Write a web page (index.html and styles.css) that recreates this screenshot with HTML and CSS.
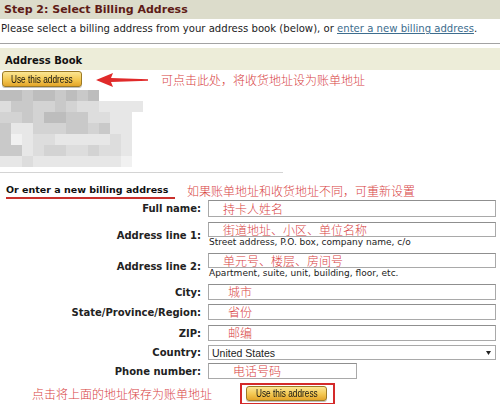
FILE: index.html
```html
<!DOCTYPE html>
<html>
<head>
<meta charset="utf-8">
<link rel="stylesheet" href="styles.css">
</head>
<body>
<div class="step">Step 2: Select Billing Address</div>
<div class="intro">Please select a billing address from your address book (below), or <a href="#">enter a new billing address</a>.</div>
<div class="rule"></div>
<div class="bookbar">Address Book</div>
<div class="pickrow">
  <div class="btn"><span>Use this address</span></div>
  <svg class="arrow" width="52" height="14" viewBox="0 0 52 14"><polygon points="0,7 17,0 15,5 52,6.2 52,7.8 15,9 17,14" fill="#e02a2a"/></svg>
  <div class="cn note1">可点击此处，将收货地址设为账单地址</div>
</div>
<div class="mosaic">
  <i class="a"></i><i class="a"></i><i class="b"></i><i class="a"></i><i class="a"></i><i class="b"></i><i class="a"></i><i class="b"></i><i class="a"></i><i class="w"></i><i class="w"></i><i class="w"></i><i class="w"></i>
  <i class="d"></i><i class="b"></i><i class="b"></i><i class="c"></i><i class="c"></i><i class="b"></i><i class="c"></i><i class="d"></i><i class="d"></i><i class="e"></i><i class="e"></i><i class="e"></i><i class="e"></i>
  <i class="c"></i><i class="c"></i><i class="b"></i><i class="c"></i><i class="a"></i><i class="a"></i><i class="b"></i><i class="b"></i><i class="d"></i><i class="d"></i><i class="e"></i><i class="e"></i><i class="w"></i>
  <i class="b"></i><i class="e"></i><i class="e"></i><i class="c"></i><i class="c"></i><i class="c"></i><i class="b"></i><i class="b"></i><i class="c"></i><i class="b"></i><i class="e"></i><i class="e"></i><i class="w"></i>
  <i class="b"></i><i class="f"></i><i class="e"></i><i class="d"></i><i class="d"></i><i class="e"></i><i class="e"></i><i class="e"></i><i class="e"></i><i class="e"></i><i class="d"></i><i class="e"></i><i class="w"></i>
  <i class="b"></i><i class="b"></i><i class="e"></i><i class="d"></i><i class="c"></i><i class="c"></i><i class="d"></i><i class="d"></i><i class="c"></i><i class="d"></i><i class="d"></i><i class="e"></i><i class="w"></i>
  <i class="e"></i><i class="e"></i><i class="d"></i><i class="e"></i><i class="e"></i><i class="e"></i><i class="e"></i><i class="e"></i><i class="e"></i><i class="e"></i><i class="e"></i><i class="f"></i><i class="w"></i>
</div>
<div class="rule2"></div>
<div class="ortitle">
  <div class="or">Or enter a new billing address</div>
  <div class="cn note2">如果账单地址和收货地址不同，可重新设置</div>
</div>
<div class="form">
  <div class="row mt1">
    <div class="lab">Full name:</div>
    <div class="field"><div class="box h17 p14 cn">持卡人姓名</div></div>
  </div>
  <div class="row mt5">
    <div class="lab">Address line 1:</div>
    <div class="field"><div class="box h15 p14 cn">街道地址、小区、单位名称</div><div class="hint">Street address, P.O. box, company name, c/o</div></div>
  </div>
  <div class="row mt5">
    <div class="lab">Address line 2:</div>
    <div class="field"><div class="box h15 p14 cn">单元号、楼层、房间号</div><div class="hint">Apartment, suite, unit, building, floor, etc.</div></div>
  </div>
  <div class="row mt5">
    <div class="lab">City:</div>
    <div class="field"><div class="box h16 p19 cn">城市</div></div>
  </div>
  <div class="row mt4">
    <div class="lab">State/Province/Region:</div>
    <div class="field"><div class="box h16 p19 cn">省份</div></div>
  </div>
  <div class="row mt5">
    <div class="lab">ZIP:</div>
    <div class="field"><div class="box h16 p19 cn">邮编</div></div>
  </div>
  <div class="row mt4">
    <div class="lab">Country:</div>
    <div class="field"><div class="select"><span>United States</span><svg width="5" height="4" viewBox="0 0 5 4"><polygon points="0,0 5,0 2.5,4" fill="#222"/></svg></div></div>
  </div>
  <div class="row mt3">
    <div class="lab">Phone number:</div>
    <div class="field"><div class="box h16 p24 cn short">电话号码</div></div>
  </div>
  <div class="saverow">
    <div class="cn note3">点击将上面的地址保存为账单地址</div>
    <div class="redbox"><div class="btn"><span>Use this address</span></div></div>
  </div>
</div>
</body>
</html>
```
FILE: styles.css
```css
* { box-sizing: border-box; }
html, body { margin: 0; padding: 0; background: #fff; }
body {
  width: 500px; height: 404px; overflow: hidden;
  font-family: "DejaVu Sans", Verdana, sans-serif; color: #222;
}
.cn { font-family: "Noto Sans CJK SC", sans-serif; font-weight: 300; color: #d8423f; font-size: 12px; white-space: nowrap; }

.step {
  height: 19px; background: #dcdccb; padding-left: 4px;
  font-weight: bold; font-size: 11px; line-height: 19px; color: #5e1b17;
}
.intro { height: 17px; padding: 3px 0 0 1px; font-size: 10.1px; line-height: 14px; white-space: nowrap; }
.intro a { color: #3d6d8e; text-decoration: underline; }
.rule { height: 1px; background: #a3a3a3; margin-top: 7px; }

.bookbar {
  margin-top: 4px; height: 22px; background: #ededd9; padding: 3px 0 0 5px;
  font-weight: bold; font-size: 10px; line-height: 19px; color: #111;
}
.pickrow { display: flex; align-items: flex-start; height: 17px; margin-top: 1px; padding-left: 2px; }
.arrow { margin-left: 14px; margin-top: 2px; flex: none; }
.note1 { margin-left: 13px; line-height: 17px; }

.btn {
  width: 80px; height: 16px; flex: none;
  border: 1px solid #9c7a26; border-radius: 3px;
  background: linear-gradient(#fbe694, #f4c851 55%, #e3a52a);
  box-shadow: 0 1px 0 rgba(0,0,0,.25);
  font-family: "Liberation Sans", Arial, sans-serif; font-size: 11.5px; color: #111;
  display: flex; align-items: center; justify-content: center; overflow: visible;
}
.btn span { display: inline-block; white-space: nowrap; transform: scaleX(.72); line-height: 13px; }

.mosaic {
  margin-top: 2px; display: grid;
  grid-template-columns: repeat(13, 11px); grid-auto-rows: 11px;
  width: 143px; filter: blur(0.7px);
}
.mosaic i { display: block; }
.mosaic .a { background: #bdbdbd; }
.mosaic .b { background: #c9c9c9; }
.mosaic .c { background: #d3d3d3; }
.mosaic .d { background: #dddddd; }
.mosaic .e { background: #e7e7e7; }
.mosaic .f { background: #f1f1f1; }
.mosaic .w { background: #ffffff; }

.rule2 { margin-top: 5px; width: 283px; height: 1px; background: #d4d4d4; }

.ortitle { margin-top: 9px; display: flex; align-items: flex-start; }
.or {
  margin-left: 6px; width: 169px; border-bottom: 2px solid #c9302c;
  font-weight: bold; font-size: 9.5px; line-height: 15px; color: #111; white-space: nowrap;
}
.note2 { margin-left: 12px; line-height: 17px; }

.form { display: flex; flex-direction: column; }
.row { display: flex; align-items: center; }
.mt1 { margin-top: 1px; }
.mt3 { margin-top: 3px; }
.mt4 { margin-top: 4px; }
.mt5 { margin-top: 5px; }
.lab { width: 201px; flex: none; text-align: right; font-weight: bold; font-size: 10px; color: #222; white-space: nowrap; }
.field { margin-left: 7px; width: 288px; flex: none; }
.box {
  width: 288px; border: 1px solid #a9a9a9; border-top-color: #8f8f8f; background: #fff;
  overflow: hidden;
}
.box.short { width: 149px; }
.h15 { height: 15px; line-height: 14px; }
.h16 { height: 16px; line-height: 14px; }
.h17 { height: 17px; line-height: 15px; }
.p14 { padding-left: 14px; }
.p19 { padding-left: 19px; }
.p24 { padding-left: 24px; }
.hint { font-size: 9px; line-height: 11px; padding-left: 1px; white-space: nowrap; color: #222; }

.select {
  height: 15px; border: 1px solid #a9a9a9; background: #fff;
  display: flex; align-items: center; justify-content: space-between;
  padding: 0 4px 0 3px;
  font-family: "Liberation Sans", Arial, sans-serif; font-size: 10.5px; color: #222;
}

.saverow { display: flex; align-items: center; margin-top: 4px; padding-left: 32px; height: 22px; }
.note3 { line-height: 14px; }
.redbox { margin-left: 28px; width: 95px; height: 22px; border: 2px solid #d42a2a; padding: 1px 0 0 4px; flex: none; }
.redbox .btn { width: 81px; height: 15px; }
```
